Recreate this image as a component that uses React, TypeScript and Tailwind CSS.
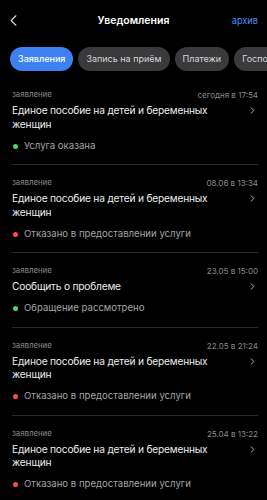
import { ChevronLeft, ChevronRight } from "lucide-react";

const tabs = ["Заявления", "Запись на приём", "Платежи", "Госпочта"];

const items = [
  { date: "сегодня в 17:54", title: "Единое пособие на детей и беременных женщин", status: "Услуга оказана", ok: true },
  { date: "08.06 в 13:34", title: "Единое пособие на детей и беременных женщин", status: "Отказано в предоставлении услуги", ok: false },
  { date: "23.05 в 15:00", title: "Сообщить о проблеме", status: "Обращение рассмотрено", ok: true },
  { date: "22.05 в 21:24", title: "Единое пособие на детей и беременных женщин", status: "Отказано в предоставлении услуги", ok: false },
  { date: "25.04 в 13:22", title: "Единое пособие на детей и беременных женщин", status: "Отказано в предоставлении услуги", ok: false },
];

export default function App() {
  return (
    <div
      className="h-[500px] w-[267px] overflow-hidden bg-black text-white"
      style={{ fontFamily: "Inter, 'Noto Sans', sans-serif" }}
    >
      {/* header */}
      <div className="relative flex h-[40px] items-center justify-center pt-[2px]">
        <ChevronLeft className="absolute left-[4px] top-[11px] h-[19px] w-[19px] text-[#d8d8d8]" strokeWidth={1.4} />
        <h1 className="text-[10.5px] font-semibold">Уведомления</h1>
        <span className="absolute right-[9px] top-[14px] text-[9.2px] text-[#4a8ff7]">архив</span>
      </div>

      {/* tabs */}
      <div className="mt-[7px] flex gap-[5px] overflow-hidden pl-[10px]">
        {tabs.map((t, i) => (
          <div
            key={t}
            className={
              "flex h-[24px] shrink-0 items-center rounded-full px-[8px] text-[9px] " +
              (i === 0 ? "bg-[#3d80f2] font-medium text-white" : "bg-[#3a3a3c] text-[#d6d6d6]")
            }
          >
            {t}
          </div>
        ))}
      </div>

      {/* list */}
      <div className="mt-[6px] pl-[12px] pr-[9px]">
        {items.map((it, i) => (
          <div key={i} className="border-b border-[#2a2a2c] pb-[12px] pt-[12px]">
            <div className="flex h-[12px] items-center justify-between text-[7.8px] text-[#8a8a8e]">
              <span>заявление</span>
              <span className="text-[8px]">{it.date}</span>
            </div>
            <div className="mt-[3px] flex items-start justify-between">
              <div className="w-[205px] text-[10.2px] leading-[13.5px] tracking-[-0.2px] text-[#ececec]">{it.title}</div>
              <ChevronRight className="mt-[1px] h-[11px] w-[11px] text-[#bdbdbd]" strokeWidth={2} />
            </div>
            <div className="mt-[9px] flex h-[12px] items-center gap-[6px] text-[9.6px] text-[#a4a4a8]">
              <span className={"ml-[1px] h-[5px] w-[5px] rounded-full " + (it.ok ? "bg-[#4cd964]" : "bg-[#ff4b4b]")} />
              <span>{it.status}</span>
            </div>
          </div>
        ))}
      </div>
    </div>
  );
}
